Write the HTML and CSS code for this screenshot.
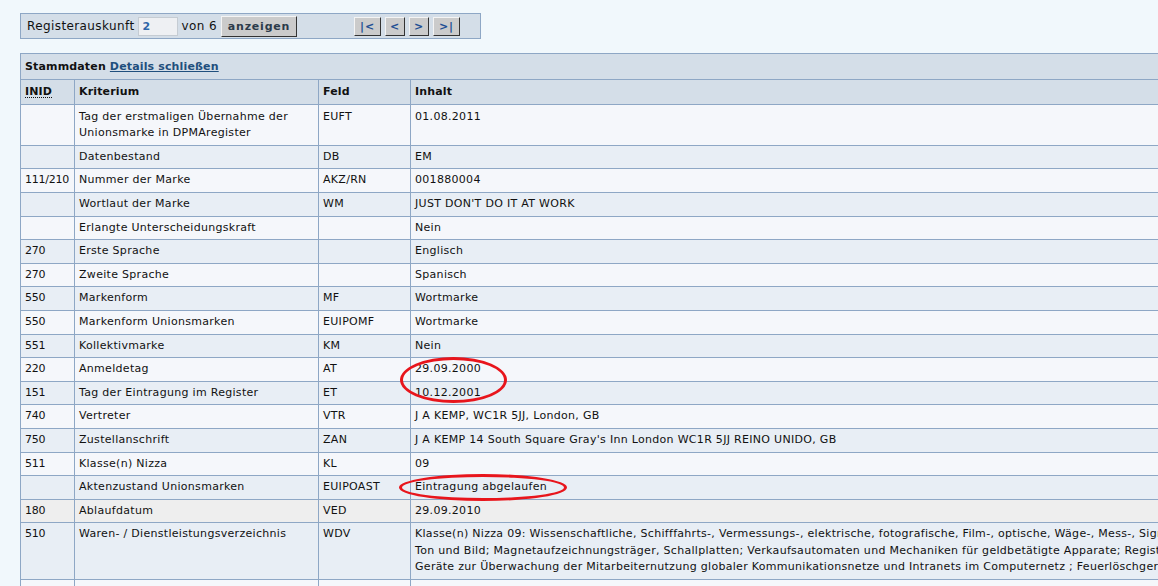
FILE: index.html
```html
<!DOCTYPE html>
<html lang="de">
<head>
<meta charset="utf-8">
<title>Registerauskunft</title>
<link rel="stylesheet" href="styles.css">
</head>
<body>
<div class="page">
  <form class="navbar">
    <span class="label">Registerauskunft</span>
    <input class="num" type="text" value="2">
    <span class="label">von 6</span>
    <button type="button" class="btn">anzeigen</button>
    <div class="pager">
      <button type="button" class="pbtn wide">|&lt;</button>
      <button type="button" class="pbtn">&lt;</button>
      <button type="button" class="pbtn">&gt;</button>
      <button type="button" class="pbtn wide">&gt;|</button>
    </div>
  </form>

  <div class="tablewrap">
    <table class="data">
      <colgroup>
        <col class="c-inid"><col class="c-krit"><col class="c-feld"><col class="c-inhalt">
      </colgroup>
      <thead>
        <tr class="caption"><th colspan="4">Stammdaten <a href="#">Details schließen</a></th></tr>
        <tr class="heads"><th><abbr>INID</abbr></th><th>Kriterium</th><th>Feld</th><th>Inhalt</th></tr>
      </thead>
      <tbody>
        <tr class="l"><td></td><td>Tag der erstmaligen Übernahme der Unionsmarke in DPMAregister</td><td>EUFT</td><td>01.08.2011</td></tr>
        <tr class="d"><td></td><td>Datenbestand</td><td>DB</td><td>EM</td></tr>
        <tr class="l"><td>111/210</td><td>Nummer der Marke</td><td>AKZ/RN</td><td>001880004</td></tr>
        <tr class="d"><td></td><td>Wortlaut der Marke</td><td>WM</td><td>JUST DON'T DO IT AT WORK</td></tr>
        <tr class="l"><td></td><td>Erlangte Unterscheidungskraft</td><td></td><td>Nein</td></tr>
        <tr class="d"><td>270</td><td>Erste Sprache</td><td></td><td>Englisch</td></tr>
        <tr class="l"><td>270</td><td>Zweite Sprache</td><td></td><td>Spanisch</td></tr>
        <tr class="d"><td>550</td><td>Markenform</td><td>MF</td><td>Wortmarke</td></tr>
        <tr class="l"><td>550</td><td>Markenform Unionsmarken</td><td>EUIPOMF</td><td>Wortmarke</td></tr>
        <tr class="d"><td>551</td><td>Kollektivmarke</td><td>KM</td><td>Nein</td></tr>
        <tr class="l"><td>220</td><td>Anmeldetag</td><td>AT</td><td>29.09.2000</td></tr>
        <tr class="d"><td>151</td><td>Tag der Eintragung im Register</td><td>ET</td><td>10.12.2001</td></tr>
        <tr class="l"><td>740</td><td>Vertreter</td><td>VTR</td><td>J A KEMP, WC1R 5JJ, London, GB</td></tr>
        <tr class="d"><td>750</td><td>Zustellanschrift</td><td>ZAN</td><td>J A KEMP 14 South Square Gray's Inn London WC1R 5JJ REINO UNIDO, GB</td></tr>
        <tr class="l"><td>511</td><td>Klasse(n) Nizza</td><td>KL</td><td>09</td></tr>
        <tr class="d"><td></td><td>Aktenzustand Unionsmarken</td><td>EUIPOAST</td><td>Eintragung abgelaufen</td></tr>
        <tr class="hl"><td>180</td><td>Ablaufdatum</td><td>VED</td><td>29.09.2010</td></tr>
        <tr class="d"><td>510</td><td>Waren- / Dienstleistungsverzeichnis</td><td>WDV</td><td class="long">Klasse(n) Nizza 09: Wissenschaftliche, Schifffahrts-, Vermessungs-, elektrische, fotografische, Film-, optische, Wäge-, Mess-, Signal-, Kontroll-, Rettungs- und Unterrichtsapparate und -instrumente; Apparate zur Aufzeichnung, Übertragung und Wiedergabe von<br>Ton und Bild; Magnetaufzeichnungsträger, Schallplatten; Verkaufsautomaten und Mechaniken für geldbetätigte Apparate; Registrierkassen, Rechenmaschinen, Datenverarbeitungsgeräte und Computer; Software;<br>Geräte zur Überwachung der Mitarbeiternutzung globaler Kommunikationsnetze und Intranets im Computernetz ; Feuerlöschgeräte.</td></tr>
        <tr class="l"><td>&nbsp;</td><td></td><td></td><td></td></tr>
      </tbody>
    </table>
    <span class="mark mark-dates"></span>
    <span class="mark mark-status"></span>
  </div>
</div>
</body>
</html>
```

FILE: styles.css
```css
html, body {
  margin: 0;
  padding: 0;
  overflow: hidden;
  background: #f1f8fc;
}

.page {
  padding: 13px 0 0 20px;
  font-family: "DejaVu Sans", Verdana, sans-serif;
  font-size: 11px;
  letter-spacing: 0.3px;
  color: #111;
}

.navbar {
  display: flex;
  align-items: center;
  width: 459px;
  height: 24px;
  border: 1px solid #8ea7c5;
  background: #d4dee8;
  margin: 0;
  padding: 0;
  box-sizing: content-box;
}

.label {
  font-size: 12px;
  letter-spacing: 0.4px;
  color: #111;
}

.navbar .label:first-child {
  margin-left: 6px;
}

.num {
  width: 40px;
  height: 19px;
  margin: 0 4px 0 3px;
  padding: 0 4px;
  border: 1px solid #c5ccd3;
  background: #eef0f3;
  font-family: "DejaVu Sans", Verdana, sans-serif;
  font-size: 11px;
  font-weight: bold;
  color: #2f66a8;
  box-sizing: border-box;
}

.btn {
  margin-left: 4px;
  height: 21px;
  width: 76px;
  padding: 0;
  background: #cbcbcb;
  border: 1px solid;
  border-color: #f4f4f4 #333 #333 #f4f4f4;
  font-family: "DejaVu Sans", Verdana, sans-serif;
  font-size: 11px;
  font-weight: bold;
  letter-spacing: 0.8px;
  color: #2b3a4a;
}

.pager {
  display: flex;
  gap: 4px;
  margin-left: 57px;
}

.pbtn {
  height: 19px;
  width: 20px;
  padding: 0;
  background: #cbcbcb;
  border: 1px solid;
  border-color: #f4f4f4 #333 #333 #f4f4f4;
  font-family: "DejaVu Sans", Verdana, sans-serif;
  font-size: 11px;
  font-weight: bold;
  letter-spacing: 1px;
  color: #1d4f94;
}

.pbtn.wide {
  width: 27px;
}

.tablewrap {
  position: relative;
  margin-top: 14px;
  width: 1800px;
}

.data {
  border-collapse: collapse;
  width: 1800px;
  table-layout: fixed;
}

.c-inid { width: 54px; }
.c-krit { width: 244px; }
.c-feld { width: 92px; }
.c-inhalt { width: auto; }

.data th, .data td {
  border: 1px solid #8ea7c5;
  text-align: left;
  vertical-align: top;
  line-height: 16.6px;
  padding: 3px 4px 3px 4px;
}

.data tbody td:first-child {
  letter-spacing: -0.25px;
}

.data thead th {
  background: #d4dee8;
  font-weight: bold;
  letter-spacing: 0.15px;
  color: #111;
}

.caption th {
  padding: 5px 4px 4px 4px;
  line-height: 16px;
}

.caption a {
  color: #1f4f7d;
  text-decoration: underline;
}

.heads th {
  padding-top: 4px;
  padding-bottom: 3px;
}

tbody tr:first-child td {
  padding-top: 4px;
}

abbr {
  text-decoration: underline dotted;
  text-underline-offset: 2px;
}

tr.l td { background: #f5f7fb; }
tr.d td { background: #e8eef5; }
tr.hl td { background: #eeeeee; }

.long { white-space: nowrap; }

.mark {
  position: absolute;
  border: 3px solid #e8151c;
  border-radius: 50%;
  box-sizing: border-box;
}

.mark-dates {
  left: 380px;
  top: 304px;
  width: 107px;
  height: 46px;
}

.mark-status {
  left: 379px;
  top: 421px;
  width: 168px;
  height: 27px;
}
```
